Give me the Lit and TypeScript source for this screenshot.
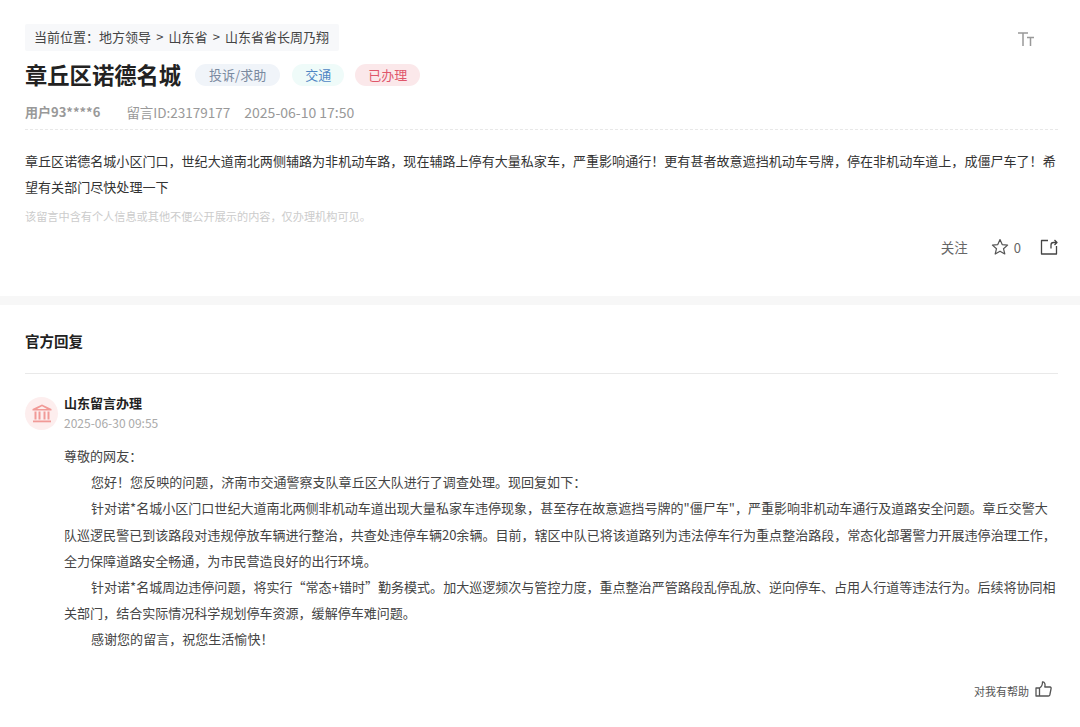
import { LitElement, html, css } from "lit";
import { customElement } from "lit/decorators.js";

@customElement("app-root")
export class AppRoot extends LitElement {
  static styles = css`
    :host { display: block; width: 1080px; height: 727px; overflow: hidden; background: #fff; font-family: "Noto Sans CJK SC", "Noto Sans", sans-serif; color: #333; }
    .top { padding: 24px 22px 0 25px; height: 272px; box-sizing: border-box; }
    .crumbrow { display: flex; justify-content: space-between; align-items: flex-start; }
    .crumb { background: #f7f8fa; border-radius: 2px; height: 27px; line-height: 26px; padding: 0 10px 0 9px; font-size: 13px; word-spacing: 2.25px; color: #444; }
    .tt { margin: 8px 24px 0 0; }
    .titlerow { display: flex; align-items: center; margin-top: 6px; height: 36px; }
    h1 { margin: -3px 14px 0 0; font-size: 22.3px; line-height: 36px; font-weight: 700; color: #222; }
    .tag { height: 22px; line-height: 22px; border-radius: 11px; font-size: 13px; padding: 0 13px; margin-right: 11px; }
    .t1 { background: #f0f4f9; color: #7a8aa0; padding: 0 14px; margin-right: 12px; }
    .t2 { background: #effbf9; color: #4f86c4; }
    .t3 { background: #fbe8ea; color: #e0566a; }
    .meta { display: flex; font-size: 13px; color: #999; margin-top: 9px; height: 20px; line-height: 20px; padding-bottom: 7px; border-bottom: 1px dashed #e8e8e8; }
    .meta b { font-weight: 700; margin-right: 26px; color: #999; }
    .meta span { margin-right: 14px; font-size: 13.5px; }
    .meta span.d { font-size: 14px; }
    .body { font-size: 13.06px; line-height: 26px; color: #333; margin: 18px 0 0; }
    .note { font-size: 11.16px; color: #ccc; margin-top: 8px; line-height: 16px; }
    .acts { display: flex; justify-content: flex-end; align-items: center; font-size: 13.5px; color: #666; margin-top: 11px; height: 24px; }
    .acts .g1 { margin-right: 23px; }
    .acts svg { display: block; }
    .count { margin: 0 19px 0 5px; font-size: 13px; }
    .band { height: 9px; background: #f7f7f7; margin-top: 24px; }
    .reply { padding: 0 22px 0 25px; }
    .rh { font-size: 14.5px; font-weight: 700; color: #222; line-height: 20px; padding: 26px 0 22px; border-bottom: 1px solid #e9e9e9; }
    .who { display: flex; margin-top: 20px; }
    .av { width: 33px; height: 33px; border-radius: 50%; background: #fdeeee; display: flex; align-items: center; justify-content: center; margin: 3px 6px 0 0; }
    .name { font-size: 13px; font-weight: 700; color: #222; line-height: 18px; }
    .date { font-size: 12px; color: #aaa; line-height: 18px; margin-top: 2px; }
    .content { margin: 11px 0 0 39px; font-size: 13.04px; line-height: 26.2px; color: #444; }
    .content p { margin: 0; text-indent: 27px; }
    .content p.ni { text-indent: 0; }
    .help { display: flex; justify-content: flex-end; align-items: center; font-size: 11px; color: #555; margin: 27px 6px 0 0; gap: 6px; }
    .help span { margin-top: 3px; }
  `;

  render() {
    return html`
      <div class="top">
        <div class="crumbrow">
          <div class="crumb">当前位置：地方领导 &gt; 山东省 &gt; 山东省省长周乃翔</div>
          <svg class="tt" width="16" height="14" viewBox="0 0 16 14" fill="none" stroke="#999" stroke-width="1.5"><path d="M0 1H10M5 1V14M9 5.5H16M12.5 5.5V14"/></svg>
        </div>
        <div class="titlerow">
          <h1>章丘区诺德名城</h1>
          <span class="tag t1">投诉/求助</span><span class="tag t2">交通</span><span class="tag t3">已办理</span>
        </div>
        <div class="meta"><b>用户93****6</b><span>留言ID:23179177</span><span class="d">2025-06-10 17:50</span></div>
        <div class="body">章丘区诺德名城小区门口，世纪大道南北两侧辅路为非机动车路，现在辅路上停有大量私家车，严重影响通行！更有甚者故意遮挡机动车号牌，停在非机动车道上，成僵尸车了！希望有关部门尽快处理一下</div>
        <div class="note">该留言中含有个人信息或其他不便公开展示的内容，仅办理机构可见。</div>
        <div class="acts">
          <span class="g1">关注</span>
          <svg width="18" height="18" viewBox="0 0 18 18" fill="none" stroke="#555" stroke-width="1.2" stroke-linejoin="round"><path d="M9 1.5L11.2 6.6L16.6 7.1L12.5 10.7L13.8 16L9 13.2L4.2 16L5.5 10.7L1.4 7.1L6.8 6.6Z"/></svg>
          <span class="count">0</span>
          <svg width="18" height="18" viewBox="0 0 18 18" fill="none" stroke="#444" stroke-width="1.3" stroke-linejoin="round"><path d="M8 2.5H1.5V16H16.5V8"/><path d="M11 10.5V7C11 5.5 12 4.5 13.5 4.5H16.5M14.5 2L17 4.5L14.5 7"/></svg>
        </div>
      </div>
      <div class="band"></div>
      <div class="reply">
        <div class="rh">官方回复</div>
        <div class="who">
          <div class="av"><svg width="20" height="19" viewBox="0 0 20 19" fill="#f19a97"><path d="M10 0.5L19.5 5V6.5H0.5V5ZM10 2.2L5 5H15Z" fill-rule="evenodd"/><rect x="2.5" y="7.5" width="2" height="8"/><rect x="6.5" y="7.5" width="2" height="8"/><rect x="11.5" y="7.5" width="2" height="8"/><rect x="15.5" y="7.5" width="2" height="8"/><rect x="1" y="16.5" width="18" height="1.8"/></svg></div>
          <div><div class="name">山东留言办理</div><div class="date">2025-06-30 09:55</div></div>
        </div>
        <div class="content">
          <p class="ni">尊敬的网友：</p>
          <p>您好！您反映的问题，济南市交通警察支队章丘区大队进行了调查处理。现回复如下：</p>
          <p>针对诺*名城小区门口世纪大道南北两侧非机动车道出现大量私家车违停现象，甚至存在故意遮挡号牌的"僵尸车"，严重影响非机动车通行及道路安全问题。章丘交警大队巡逻民警已到该路段对违规停放车辆进行整治，共查处违停车辆20余辆。目前，辖区中队已将该道路列为违法停车行为重点整治路段，常态化部署警力开展违停治理工作，全力保障道路安全畅通，为市民营造良好的出行环境。</p>
          <p>针对诺*名城周边违停问题，将实行“常态+错时”勤务模式。加大巡逻频次与管控力度，重点整治严管路段乱停乱放、逆向停车、占用人行道等违法行为。后续将协同相关部门，结合实际情况科学规划停车资源，缓解停车难问题。</p>
          <p>感谢您的留言，祝您生活愉快！</p>
        </div>
        <div class="help"><span>对我有帮助</span>
          <svg width="17" height="16" viewBox="0 0 17 16" fill="none" stroke="#555" stroke-width="1.3" stroke-linejoin="round"><path d="M1 7H4.5V15H1ZM4.5 7C6.5 6 7.5 4 7.5 1C9.5 0.5 10.5 3 9.8 6H15C16 6 16.3 7 16 8L14.8 14C14.6 14.7 14.1 15 13.4 15H4.5"/></svg>
        </div>
      </div>
    `;
  }
}
